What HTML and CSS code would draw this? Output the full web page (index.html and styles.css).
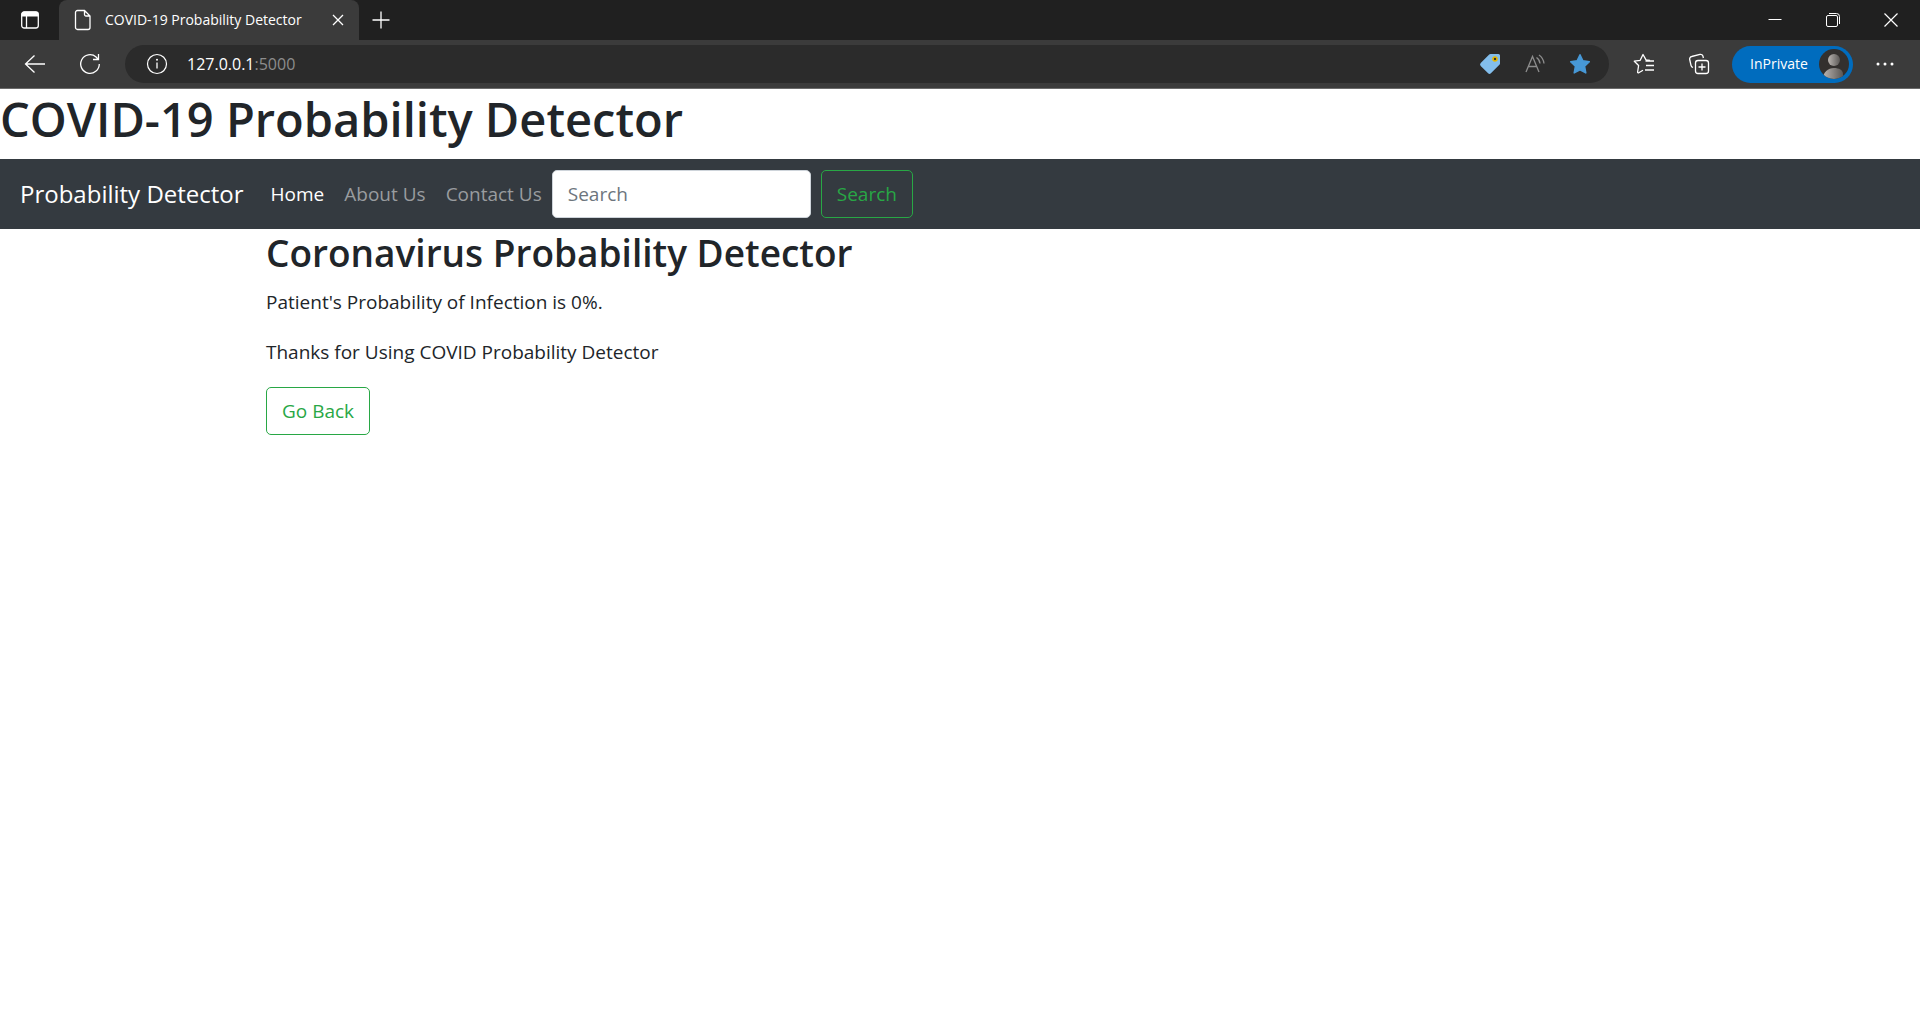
FILE: index.html
```html
<!DOCTYPE html>
<html lang="en">
<head>
<meta charset="utf-8">
<title>COVID-19 Probability Detector</title>
<link rel="stylesheet" href="styles.css">
</head>
<body>
<div class="browser">
  <div class="tabstrip">
    <button class="tab-actions" aria-label="Tab actions"><svg width="20" height="20" viewBox="0 0 20 20"><rect x="1.700" y="2" width="16.600" height="16" rx="2.500" fill="none" stroke="#fff" stroke-width="1.300"/><path d="M1.500 6.500V4.500A3 3 0 0 1 4.500 1.500h11a3 3 0 0 1 3 3v2z" fill="#fff"/><path d="M6.500 6v12" stroke="#fff" stroke-width="1.300"/></svg></button>
    <div class="tab">
      <svg class="page-icon" width="18" height="22" viewBox="0 0 18 22" fill="none" stroke="#fff" stroke-width="1.300"><path d="M3.500 1.500h7l5.500 5.500v11.500a2 2 0 0 1-2 2H3.500a2 2 0 0 1-2-2v-15a2 2 0 0 1 2-2zM10.500 1.500V5.500a1.500 1.500 0 0 0 1.500 1.500h4"/></svg>
      <span class="tab-title">COVID-19 Probability Detector</span>
      <button class="tab-close" aria-label="Close tab"><svg width="12" height="12" viewBox="0 0 12 12"><path d="M1 1l10 10M11 1L1 11" stroke="#fff" stroke-width="1.300"/></svg></button>
    </div>
    <button class="new-tab" aria-label="New tab"><svg width="18" height="18" viewBox="0 0 18 18"><path d="M9 .5v17M.5 9h17" stroke="#fff" stroke-width="1.300"/></svg></button>
    <div class="window-controls">
      <button aria-label="Minimize"><svg width="14" height="14" viewBox="0 0 14 14"><path d="M.5 6.500h13" stroke="#fff"/></svg></button>
      <button aria-label="Restore"><svg width="14" height="14" viewBox="0 0 14 14" fill="none" stroke="#fff"><rect x=".5" y="2.500" width="11" height="11" rx="1.500"/><path d="M3 .5h7.500a3 3 0 0 1 3 3V11"/></svg></button>
      <button aria-label="Close"><svg width="14" height="14" viewBox="0 0 14 14"><path d="M.5.5l13 13M13.500.5l-13 13" stroke="#fff" stroke-width="1.200"/></svg></button>
    </div>
  </div>
  <div class="toolbar">
    <button class="tool" aria-label="Back"><svg width="22" height="20" viewBox="0 0 22 20"><path d="M10.500 1.500L1.500 10l9 8.500M1.500 10H21" fill="none" stroke="#fff" stroke-width="1.300"/></svg></button>
    <button class="tool" aria-label="Refresh"><svg width="22" height="22" viewBox="0 0 22 22"><path d="M20.300 11a9.300 9.300 0 1 1-3.200-7l2 2.200M19.500 1v5.500H14" fill="none" stroke="#fff" stroke-width="1.300"/></svg></button>
    <div class="address">
      <svg width="22" height="22" viewBox="0 0 22 22"><circle cx="11" cy="11" r="9.500" fill="none" stroke="#fff" stroke-width="1.200"/><path d="M11 9.500v6" stroke="#fff" stroke-width="1.300"/><circle cx="11" cy="6.800" r="1" fill="#fff"/></svg>
      <span class="url">127.0.0.1<span class="port">:5000</span></span>
      <div class="address-tools">
        <button aria-label="Shopping"><svg width="22" height="22" viewBox="0 0 22 22"><path d="M11.500 1h8a1.500 1.500 0 0 1 1.500 1.500v8a2 2 0 0 1-.6 1.300l-8.500 8.500a2 2 0 0 1-2.800 0l-7.400-7.400a2 2 0 0 1 0-2.800l8.500-8.500A2 2 0 0 1 11.500 1z" fill="#83beec"/><circle cx="16" cy="6" r="2" fill="#333" stroke="#e6b800" stroke-width="1.600"/></svg></button>
        <button aria-label="Read aloud"><svg width="20" height="20" viewBox="0 0 20 20" fill="none" stroke="#8d8d8d" stroke-width="1.300"><path d="M1 18L7.500 2.500 14 18M3.300 12.500h8.400M11.500 3.500a8 8 0 0 1 3.500 6M14 1a12 12 0 0 1 5 8.500"/></svg></button>
        <button aria-label="Edit favorite"><svg width="22" height="22" viewBox="0 0 22 22"><path d="M11 1.800l2.900 6 6.400.9-4.700 4.600 1.200 6.600L11 16.800l-5.800 3.100 1.200-6.600L1.700 8.700l6.400-.9z" fill="#4798d6" stroke="#4798d6" stroke-width="1.500" stroke-linejoin="round"/></svg></button>
      </div>
    </div>
    <button class="tool" aria-label="Favorites"><svg width="22" height="22" viewBox="0 0 22 22" fill="none" stroke="#fff" stroke-width="1.300" stroke-linejoin="round"><path d="M17 7.500l-4-.6L10 1.500 7.200 7.300 1.300 8.200l4.300 4.300-1 6.500a.8.8 0 0 0 1.200.8l4.200-2.600M12.500 8h8.500M13 12.500h8M12 17h9"/></svg></button>
    <button class="tool" aria-label="Collections"><svg width="22" height="22" viewBox="0 0 22 22" fill="none" stroke="#fff" stroke-width="1.300"><rect x="7.500" y="7.500" width="13" height="13" rx="2.500"/><path d="M14 10.500v7M10.500 14h7M5 14.500A3 3 0 0 1 3 12.300L1.700 6.500a2.500 2.500 0 0 1 2-3L12 1.400a2.500 2.500 0 0 1 3 1.900l.4 1.700"/></svg></button>
    <button class="profile">InPrivate<svg width="30" height="30" viewBox="0 0 30 30"><defs><linearGradient id="person"><stop stop-color="#bab5b1"/><stop offset="1" stop-color="#5a5755"/></linearGradient><clipPath id="disc"><circle cx="15" cy="15" r="15"/></clipPath></defs><g clip-path="url(#disc)"><path d="M0 0h30v30H0z" fill="#33302e"/><circle cx="15" cy="11" r="6" fill="url(#person)"/><path d="M4 30c0-7 5-11 11-11 5 0 9 2 9 6v5z" fill="url(#person)"/></g></svg></button>
    <button class="tool" aria-label="Settings and more"><svg width="18" height="4" viewBox="0 0 18 4" fill="#fff"><circle cx="2" cy="2" r="1.500"/><circle cx="9" cy="2" r="1.500"/><circle cx="16" cy="2" r="1.500"/></svg></button>
  </div>
</div>
<header>
  <h1>COVID-19 Probability Detector</h1>
  <nav class="navbar">
    <a class="brand" href="#">Probability Detector</a>
    <a class="nav-link active" href="#">Home</a>
    <a class="nav-link" href="#">About Us</a>
    <a class="nav-link" href="#">Contact Us</a>
    <form class="search-form">
      <input class="search" type="search" placeholder="Search" aria-label="Search">
      <button class="btn" type="submit">Search</button>
    </form>
  </nav>
</header>
<main class="container">
  <h2>Coronavirus Probability Detector</h2>
  <p>Patient's Probability of Infection is 0%.</p>
  <p>Thanks for Using COVID Probability Detector</p>
  <a class="btn" href="#">Go Back</a>
</main>
</body>
</html>
```
FILE: styles.css
```css
* { box-sizing: border-box; }

body {
  margin: 0;
  background: #fff;
  color: #212529;
  font-family: "Open Sans", "Noto Sans", sans-serif;
  font-size: 19px;
  line-height: 30px;
}

button, input { font: inherit; }
svg { display: block; flex: none; }

/* Browser window */
.browser { color: #fff; }

.browser button {
  display: flex;
  align-items: center;
  justify-content: center;
  padding: 0;
  border: 0;
  background: none;
  color: inherit;
}

.tabstrip {
  display: flex;
  height: 40px;
  background: #202020;
}

.browser .tab-actions { width: 59px; }

.tab {
  display: flex;
  align-items: center;
  width: 300px;
  padding: 0 8px 0 15px;
  border-radius: 8px 8px 0 0;
  background: #3b3b3b;
}

.tab-title {
  flex: 1;
  margin-left: 13px;
  font-size: 14px;
  white-space: nowrap;
}

.browser .tab-close { width: 26px; height: 26px; }
.browser .new-tab { width: 43px; }

.window-controls { display: flex; margin-left: auto; }
.browser .window-controls button { width: 58px; }

.toolbar {
  display: flex;
  align-items: center;
  height: 49px;
  padding: 0 8px 0 7px;
  border-bottom: 1px solid #6b6b6b;
  background: #3b3b3b;
}

.browser .tool { width: 55px; height: 38px; }

.address {
  display: flex;
  flex: 1;
  align-items: center;
  height: 38px;
  margin: 0 7px 0 8px;
  padding: 0 7px 0 21px;
  border-radius: 19px;
  background: #2b2b2b;
}

.url { margin-left: 19px; font-size: 16px; }
.port { color: #8d8d8d; }
.address-tools { display: flex; margin-left: auto; }
.browser .address-tools button { width: 45px; height: 38px; }

.browser .profile {
  justify-content: space-between;
  width: 121px;
  height: 37px;
  margin: 0 4px 0 6px;
  padding: 0 4px 0 18px;
  border-radius: 19px;
  background: #006cbe;
  font-size: 14px;
}

/* Page */
h1, h2 { margin: 0 0 10px; font-weight: 600; }
h1 { font-size: 47px; line-height: 60px; }
h2 { font-size: 37px; line-height: 48px; }
p { margin: 0 0 20px; }

.navbar {
  display: flex;
  align-items: center;
  padding: 10px 20px;
  background: #343a40;
}

.navbar a { text-decoration: none; white-space: nowrap; }
.brand { margin-right: 17px; color: #fff; font-size: 24px; }
.nav-link { padding: 10px; color: #999c9f; }
.nav-link.active { color: #fff; }
.search-form { display: flex; gap: 10px; }

.search {
  width: 259px;
  height: 48px;
  padding: 8px 15px;
  border: 1px solid #ced4da;
  border-radius: 5px;
  background: #fff;
  color: #495057;
}

.search::placeholder { color: #6c757d; opacity: 1; }

.btn {
  display: inline-block;
  padding: 8px 15px;
  border: 1px solid #28a745;
  border-radius: 5px;
  background: transparent;
  color: #28a745;
  line-height: 30px;
  text-decoration: none;
}

.container {
  max-width: 1426px;
  margin: 0 auto;
  padding: 0 19px;
}
```
